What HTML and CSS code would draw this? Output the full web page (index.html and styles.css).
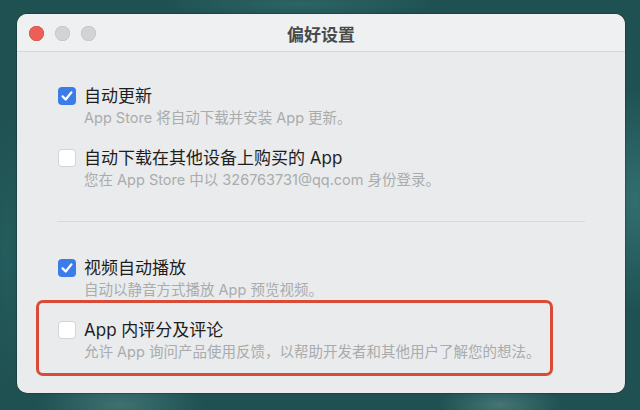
FILE: index.html
```html
<!DOCTYPE html>
<html lang="zh-CN">
<head>
<meta charset="utf-8">
<title>偏好设置</title>
<link rel="stylesheet" href="styles.css">
</head>
<body>
<div class="desktop">
  <div class="window">
    <div class="titlebar">
      <div class="lights">
        <span class="light close"></span>
        <span class="light"></span>
        <span class="light"></span>
      </div>
      <div class="title">偏好设置</div>
      <div class="spacer"></div>
    </div>
    <div class="content">
      <div class="group">
        <div class="row">
          <span class="box checked"><svg viewBox="0 0 18 18" width="18" height="18"><path d="M4.6 9.4 L7.7 12.5 L13.4 5.4" fill="none" stroke="#fff" stroke-width="2.3" stroke-linecap="round" stroke-linejoin="round"/></svg></span>
          <div class="text">
            <div class="label">自动更新</div>
            <div class="desc">App Store 将自动下载并安装 App 更新。</div>
          </div>
        </div>
        <div class="row">
          <span class="box"></span>
          <div class="text">
            <div class="label">自动下载在其他设备上购买的 App</div>
            <div class="desc">您在 App Store 中以 326763731@qq.com 身份登录。</div>
          </div>
        </div>
      </div>
      <div class="sep"></div>
      <div class="group">
        <div class="row">
          <span class="box checked"><svg viewBox="0 0 18 18" width="18" height="18"><path d="M4.6 9.4 L7.7 12.5 L13.4 5.4" fill="none" stroke="#fff" stroke-width="2.3" stroke-linecap="round" stroke-linejoin="round"/></svg></span>
          <div class="text">
            <div class="label">视频自动播放</div>
            <div class="desc">自动以静音方式播放 App 预览视频。</div>
          </div>
        </div>
        <div class="row">
          <span class="box"></span>
          <div class="text">
            <div class="label">App 内评分及评论</div>
            <div class="desc">允许 App 询问产品使用反馈，以帮助开发者和其他用户了解您的想法。</div>
          </div>
        </div>
      </div>
    </div>
    <div class="highlight"></div>
  </div>
</div>
</body>
</html>
```
FILE: styles.css
```css
html, body {
  margin: 0;
  padding: 0;
}
body {
  width: 640px;
  height: 410px;
  overflow: hidden;
  font-family: "Inter", "Noto Sans CJK SC", sans-serif;
}
.desktop {
  width: 640px;
  height: 410px;
  padding: 14px 0 0 17px;
  box-sizing: border-box;
  background:
    radial-gradient(ellipse 120px 40px at 120px 405px, rgba(120,175,170,0.35), transparent 70%),
    radial-gradient(ellipse 90px 30px at 500px 405px, rgba(140,185,180,0.35), transparent 70%),
    radial-gradient(ellipse 60px 160px at 635px 200px, rgba(70,140,140,0.5), transparent 70%),
    radial-gradient(ellipse 200px 20px at 300px 4px, rgba(60,120,120,0.5), transparent 70%),
    radial-gradient(ellipse 30px 200px at 6px 250px, rgba(40,100,100,0.6), transparent 70%),
    #1f5152;
}
.window {
  position: relative;
  width: 608px;
  height: 379px;
  border-radius: 10px;
  background: #e9ebec;
  overflow: hidden;
  box-shadow: 0 0 0 0.5px rgba(0,0,0,0.35);
}
.titlebar {
  height: 37px;
  background: #eef0f1;
  border-bottom: 1px solid #d5d7d8;
  display: grid;
  grid-template-columns: 1fr auto 1fr;
  align-items: center;
}
.lights {
  display: flex;
  gap: 11px;
  padding-left: 12px;
  padding-top: 1px;
}
.light {
  width: 15px;
  height: 15px;
  border-radius: 50%;
  background: #d3d3d3;
  box-shadow: inset 0 0 0 0.5px #bdbdbd;
}
.light.close {
  background: #ec5f56;
  box-shadow: inset 0 0 0 0.5px #d14a40;
}
.title {
  font-size: 17px;
  font-weight: 600;
  color: #4a4a4a;
  padding-top: 1px;
}
.content {
  padding: 33px 40px 0 40px;
}
.group {
  display: flex;
  flex-direction: column;
  gap: 18px;
}
.row {
  display: flex;
  gap: 8px;
  padding-left: 1px;
}
.box {
  width: 18px;
  height: 18px;
  flex: none;
  margin-top: 2px;
  border-radius: 4px;
  background: #ffffff;
  box-shadow: inset 0 0 0 1px #d3d5d6;
  box-sizing: border-box;
  display: block;
}
.box svg {
  display: block;
}
.box.checked {
  background: #3b7ce9;
  box-shadow: none;
}
.label {
  font-size: 17px;
  line-height: 22px;
  color: #1e1e1e;
}
.desc {
  font-size: 14.5px;
  line-height: 22px;
  color: #a9abad;
}
.sep {
  height: 1px;
  background: #d6d8d9;
  margin: 30px 0 35px 0;
}
.highlight {
  position: absolute;
  left: 19px;
  top: 286px;
  width: 517px;
  height: 76px;
  box-sizing: border-box;
  border: 3px solid #d94b37;
  border-radius: 7px;
}
```
